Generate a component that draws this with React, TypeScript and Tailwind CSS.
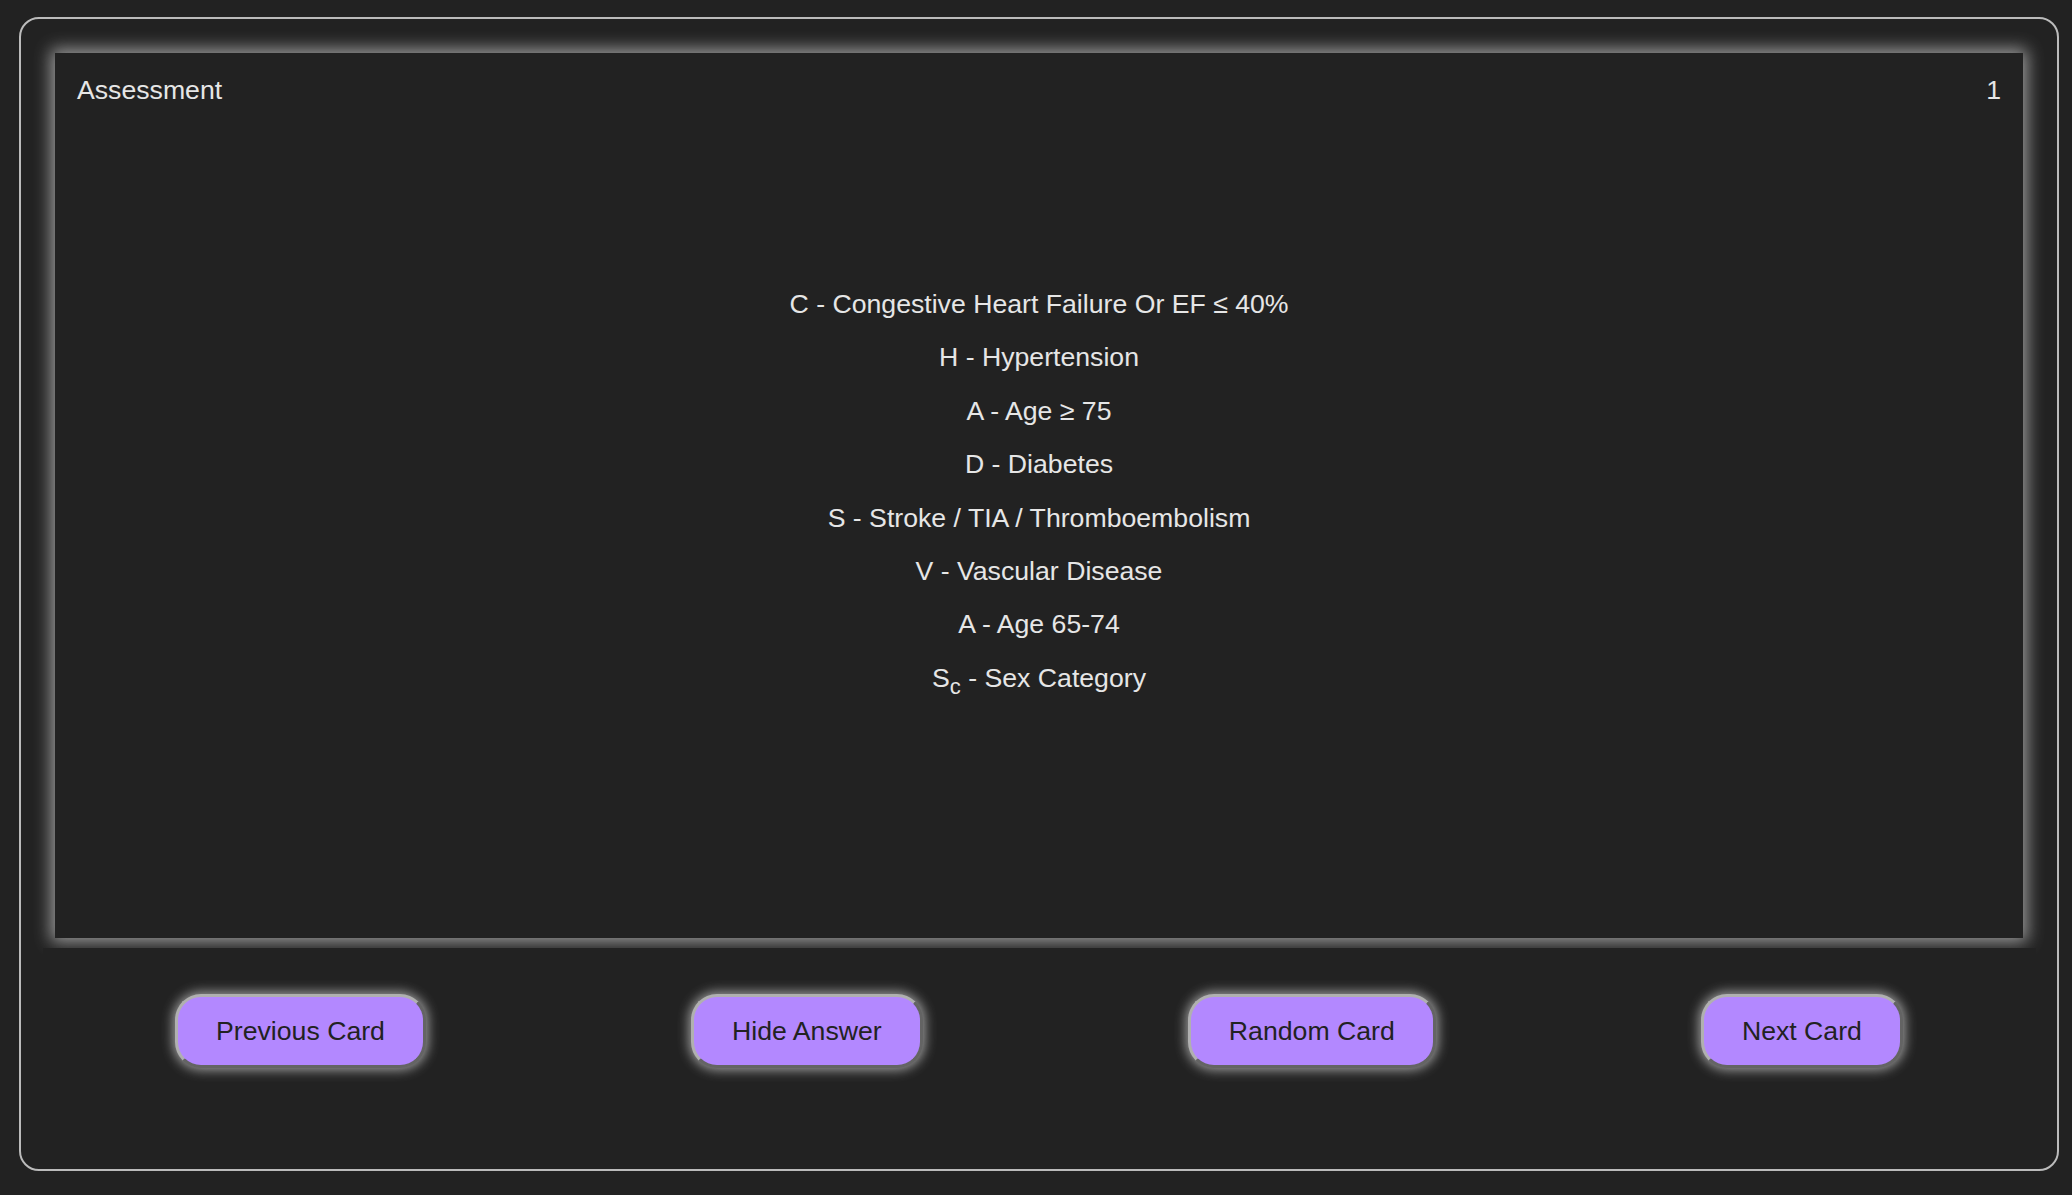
export default function App() {
  const lines: { key: string; node: React.ReactNode }[] = [
    { key: "c", node: "C - Congestive Heart Failure Or EF \u2264 40%" },
    { key: "h", node: "H - Hypertension" },
    { key: "a1", node: "A - Age \u2265 75" },
    { key: "d", node: "D - Diabetes" },
    { key: "s", node: "S - Stroke / TIA / Thromboembolism" },
    { key: "v", node: "V - Vascular Disease" },
    { key: "a2", node: "A - Age 65-74" },
    {
      key: "sc",
      node: (
        <>
          S<sub className="bottom-[-7px] text-[22px]">c</sub> - Sex Category
        </>
      ),
    },
  ];
  const buttons = ["Previous Card", "Hide Answer", "Random Card", "Next Card"];
  return (
    <div className="min-h-screen w-full bg-[#222222] pl-[19px] pt-[17px] font-['Liberation_Sans',Arial,sans-serif]">
      <div className="flex h-[1154px] w-[2040px] flex-col rounded-[20px] border-2 border-[#bbbbbb]">
        <div className="mx-[34px] mt-[34px] flex h-[885px] flex-col bg-[#222222] p-[22px] text-[26.67px] leading-[31px] text-[#e6e6e6] shadow-[0_0_16px_4px_#9c9c9c]">
          <div className="flex justify-between">
            <span>Assessment</span>
            <span>1</span>
          </div>
          <div className="flex flex-1 flex-col items-center justify-center pb-[39px]">
            {lines.map((l) => (
              <div key={l.key} className="h-[53.4px] leading-[53.4px]">
                {l.node}
              </div>
            ))}
          </div>
        </div>
        <div className="mx-[21.5px] mt-[10px] flex justify-around bg-[#222222] pt-[46px]">
          {buttons.map((b) => (
            <button
              key={b}
              className="flex h-[74px] items-center rounded-[26px] border-[3px] border-b-[#646464] border-l-[#b0b0b0] border-r-[#646464] border-t-[#b0b0b0] bg-[#b388ff] px-[38px] text-[26.67px] text-[#222222] shadow-[0_0_12px_2px_#a0a0a0]"
            >
              {b}
            </button>
          ))}
        </div>
      </div>
    </div>
  );
}
